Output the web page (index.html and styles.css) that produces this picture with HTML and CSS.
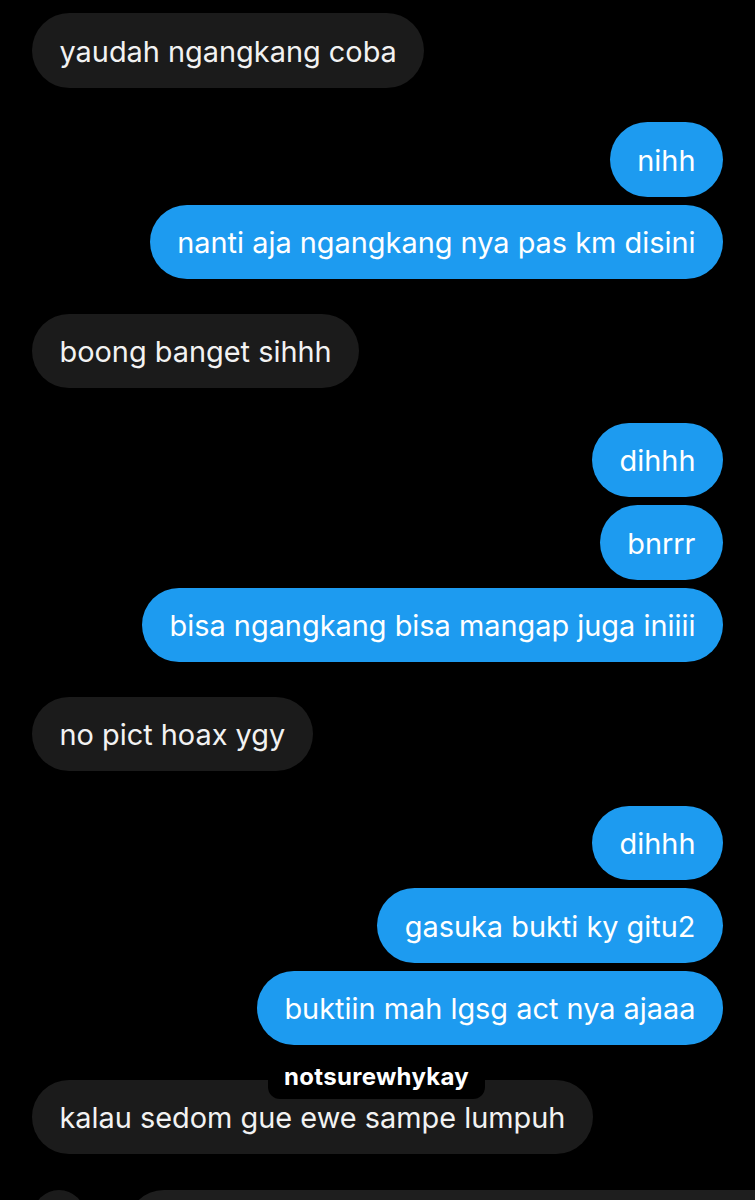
FILE: index.html
```html
<!DOCTYPE html>
<html lang="id">
<head>
<meta charset="utf-8">
<title>Chat</title>
<link rel="stylesheet" href="styles.css">
</head>
<body>
<div class="chat">
  <div class="msg in">yaudah ngangkang coba</div>

  <div class="msg out group-start">nihh</div>
  <div class="msg out">nanti aja ngangkang nya pas km disini</div>

  <div class="msg in group-start">boong banget sihhh</div>

  <div class="msg out group-start">dihhh</div>
  <div class="msg out">bnrrr</div>
  <div class="msg out">bisa ngangkang bisa mangap juga iniiii</div>

  <div class="msg in group-start">no pict hoax ygy</div>

  <div class="msg out group-start">dihhh</div>
  <div class="msg out">gasuka bukti ky gitu2</div>
  <div class="msg out">buktiin mah lgsg act nya ajaaa</div>

  <div class="msg in group-start tagged">
    kalau sedom gue ewe sampe lumpuh
    <span class="watermark">notsurewhykay</span>
  </div>

  <div class="next-row">
    <div class="avatar"></div>
    <div class="partial"></div>
  </div>
</div>
</body>
</html>
```
FILE: styles.css
```css
html, body {
  margin: 0;
  padding: 0;
  background: #000;
  height: 1200px;
  overflow: hidden;
}

.chat {
  display: flex;
  flex-direction: column;
  gap: 8px;
  padding: 13px 32px 0;
  height: 1200px;
  box-sizing: border-box;
  overflow: hidden;
  font-family: "Inter", "Roboto", "Noto Sans", sans-serif;
}

.msg {
  box-sizing: border-box;
  flex: none;
  height: 74.5px;
  display: flex;
  align-items: center;
  padding: 2px 27.5px 0;
  border-radius: 38px;
  font-size: 28.9px;
  color: #f2f2f2;
  white-space: nowrap;
}

.group-start {
  margin-top: 26.5px;
}

.in {
  align-self: flex-start;
  background: #1b1b1b;
}

.out {
  align-self: flex-end;
  background: #1d9bf0;
  color: #fff;
}

.tagged {
  position: relative;
}

.watermark {
  position: absolute;
  left: 236px;
  top: -24px;
  padding: 6px 16px 8px;
  background: #000;
  border-radius: 12px;
  font-size: 24px;
  font-weight: 700;
  color: #fff;
  letter-spacing: 0.3px;
}

.next-row {
  display: flex;
  flex: none;
  gap: 42px;
  margin-top: 28px;
  margin-left: 1px;
  margin-right: -32px;
}

.avatar {
  width: 52px;
  height: 52px;
  border-radius: 50%;
  background: #1b1b1b;
  flex: none;
}

.partial {
  flex: 1;
  height: 74px;
  border-radius: 38px 0 0 38px;
  background: #1e1e1e;
}
```
